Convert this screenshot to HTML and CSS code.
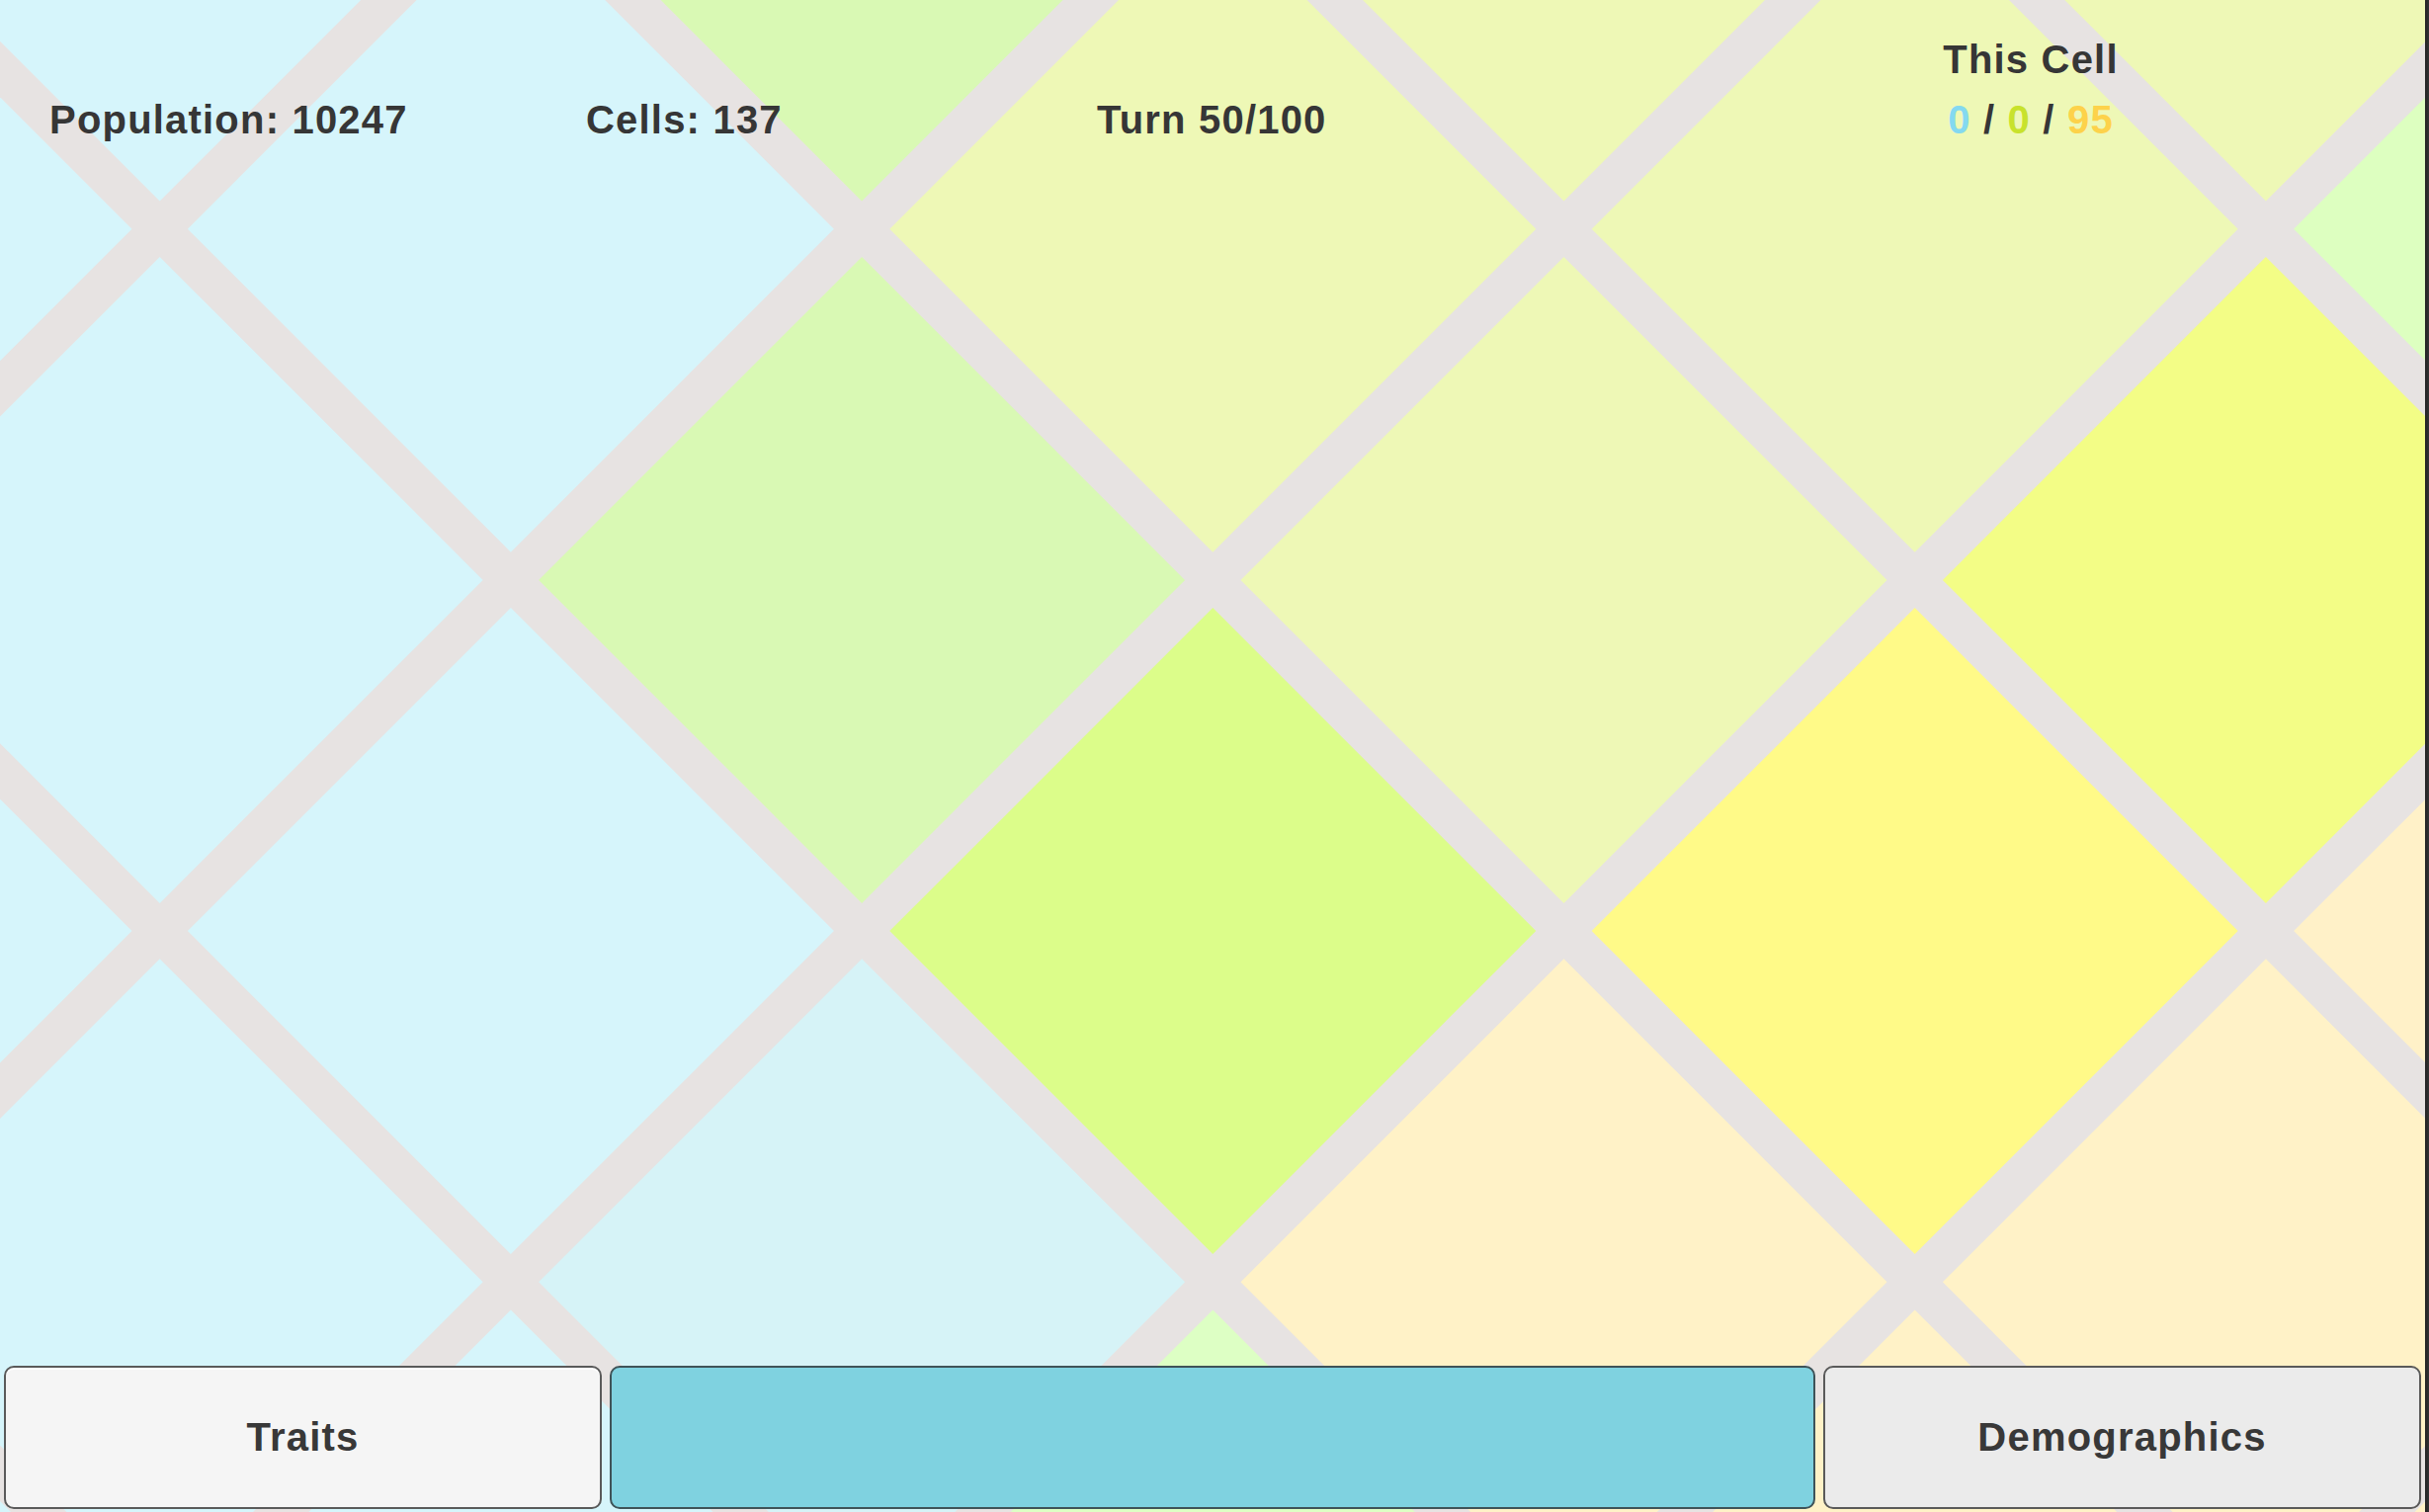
FILE: index.html
```html
<!DOCTYPE html>
<html lang="en">
<head>
<meta charset="utf-8">
<title>Cell Simulation</title>
<link rel="stylesheet" href="styles.css">
</head>
<body>
<div class="screen">
  <div class="viewport">
    <svg class="map" width="2454" height="1530" viewBox="0 0 2454 1530" xmlns="http://www.w3.org/2000/svg">
      <defs>
        <polygon id="cell" points="0,-327 327,0 0,327 -327,0"/>
      </defs>
      <rect x="0" y="0" width="2454" height="1530" fill="#e7e3e2"/>
      <!-- row j=-1 -->
      <use href="#cell" x="161.7" y="-123.5" fill="#d6f5fb"/>
      <use href="#cell" x="872.1" y="-123.5" fill="#d9f9b4"/>
      <use href="#cell" x="1582.5" y="-123.5" fill="#eef8b6"/>
      <use href="#cell" x="2292.9" y="-123.5" fill="#eef8b6"/>
      <!-- row j=0 -->
      <use href="#cell" x="-193.5" y="231.7" fill="#d6f5fb"/>
      <use href="#cell" x="516.9" y="231.7" fill="#d6f5fb"/>
      <use href="#cell" x="1227.3" y="231.7" fill="#eef8b6"/>
      <use href="#cell" x="1937.7" y="231.7" fill="#eef8b6"/>
      <use href="#cell" x="2648.1" y="231.7" fill="#ddffc0"/>
      <!-- row j=1 -->
      <use href="#cell" x="161.7" y="586.9" fill="#d6f5fb"/>
      <use href="#cell" x="872.1" y="586.9" fill="#d9f9b4"/>
      <use href="#cell" x="1582.5" y="586.9" fill="#eef8b6"/>
      <use href="#cell" x="2292.9" y="586.9" fill="#f3fd86"/>
      <!-- row j=2 -->
      <use href="#cell" x="-193.5" y="942.1" fill="#d6f5fb"/>
      <use href="#cell" x="516.9" y="942.1" fill="#d6f5fb"/>
      <use href="#cell" x="1227.3" y="942.1" fill="#dcfd8a"/>
      <use href="#cell" x="1937.7" y="942.1" fill="#fffa88"/>
      <use href="#cell" x="2648.1" y="942.1" fill="#fff1c8"/>
      <!-- row j=3 -->
      <use href="#cell" x="161.7" y="1297.3" fill="#d6f5fb"/>
      <use href="#cell" x="872.1" y="1297.3" fill="#d6f3f7"/>
      <use href="#cell" x="1582.5" y="1297.3" fill="#fff2c7"/>
      <use href="#cell" x="2292.9" y="1297.3" fill="#fff2c7"/>
      <!-- row j=4 -->
      <use href="#cell" x="-193.5" y="1652.5" fill="#d6f5fb"/>
      <use href="#cell" x="516.9" y="1652.5" fill="#d6f5fb"/>
      <use href="#cell" x="1227.3" y="1652.5" fill="#ddffc4"/>
      <use href="#cell" x="1937.7" y="1652.5" fill="#fff2c7"/>
      <use href="#cell" x="2648.1" y="1652.5" fill="#fff2c7"/>
    </svg>

    <div class="hud">
      <div class="stat stat-pop">Population: 10247</div>
      <div class="stat stat-cells">Cells: 137</div>
      <div class="stat stat-turn">Turn 50/100</div>
      <div class="stat cell-title">This Cell</div>
      <div class="stat cell-counts"><span class="c-blue">0</span> / <span class="c-green">0</span> / <span class="c-amber">95</span></div>
    </div>

    <div class="bar">
      <button class="btn btn-traits">Traits</button>
      <button class="btn btn-main"></button>
      <button class="btn btn-demo">Demographics</button>
    </div>
  </div>
  <div class="edge"></div>
</div>
</body>
</html>
```

FILE: styles.css
```css
html, body {
  margin: 0;
  padding: 0;
}

body {
  width: 2458px;
  height: 1530px;
  overflow: hidden;
  font-family: "Liberation Sans", Arial, sans-serif;
  background: #2a2a2a;
}

.screen {
  display: flex;
  width: 2458px;
  height: 1530px;
}

.viewport {
  position: relative;
  width: 2454px;
  height: 1530px;
  display: flex;
  flex-direction: column;
  overflow: hidden;
}

.map {
  position: absolute;
  left: 0;
  top: 0;
  display: block;
}

.edge {
  width: 4px;
  height: 1530px;
  background: linear-gradient(to right, #222222, #333333);
}

.hud {
  position: relative;
  display: grid;
  grid-template-columns: 543px 517px 742px 406px;
  grid-template-rows: 61px 61px;
  padding: 30px 0 0 50px;
}

.stat {
  font-size: 40px;
  line-height: 61px;
  font-weight: bold;
  letter-spacing: 1.2px;
  color: #363636;
  white-space: nowrap;
}

.stat-pop { grid-column: 1; grid-row: 2; }
.stat-cells { grid-column: 2; grid-row: 2; }
.stat-turn { grid-column: 3; grid-row: 2; }
.cell-title { grid-column: 4; grid-row: 1; text-align: center; }
.cell-counts { grid-column: 4; grid-row: 2; text-align: center; }

.c-blue { color: #84d9f0; }
.c-green { color: #c8e22c; }
.c-amber { color: #fdd24a; }

.bar {
  position: relative;
  margin-top: auto;
  display: flex;
  gap: 8px;
  padding: 0 4px 3px 4px;
  height: 145px;
}

.btn {
  box-sizing: border-box;
  height: 145px;
  margin: 0;
  padding: 0;
  border: 2px solid #5a5a5a;
  border-radius: 10px;
  font-family: "Liberation Sans", Arial, sans-serif;
  font-size: 40px;
  font-weight: bold;
  letter-spacing: 1.2px;
  color: #383838;
  display: flex;
  align-items: center;
  justify-content: center;
}

.btn-traits {
  width: 605px;
  background: #f5f5f5;
  box-shadow: inset 0 2px 0 #ffffff;
}

.btn-main {
  flex: 1;
  background: #7fd2e0;
  border-color: #3f5358;
}

.btn-demo {
  width: 605px;
  background: #ebebeb;
}
```
